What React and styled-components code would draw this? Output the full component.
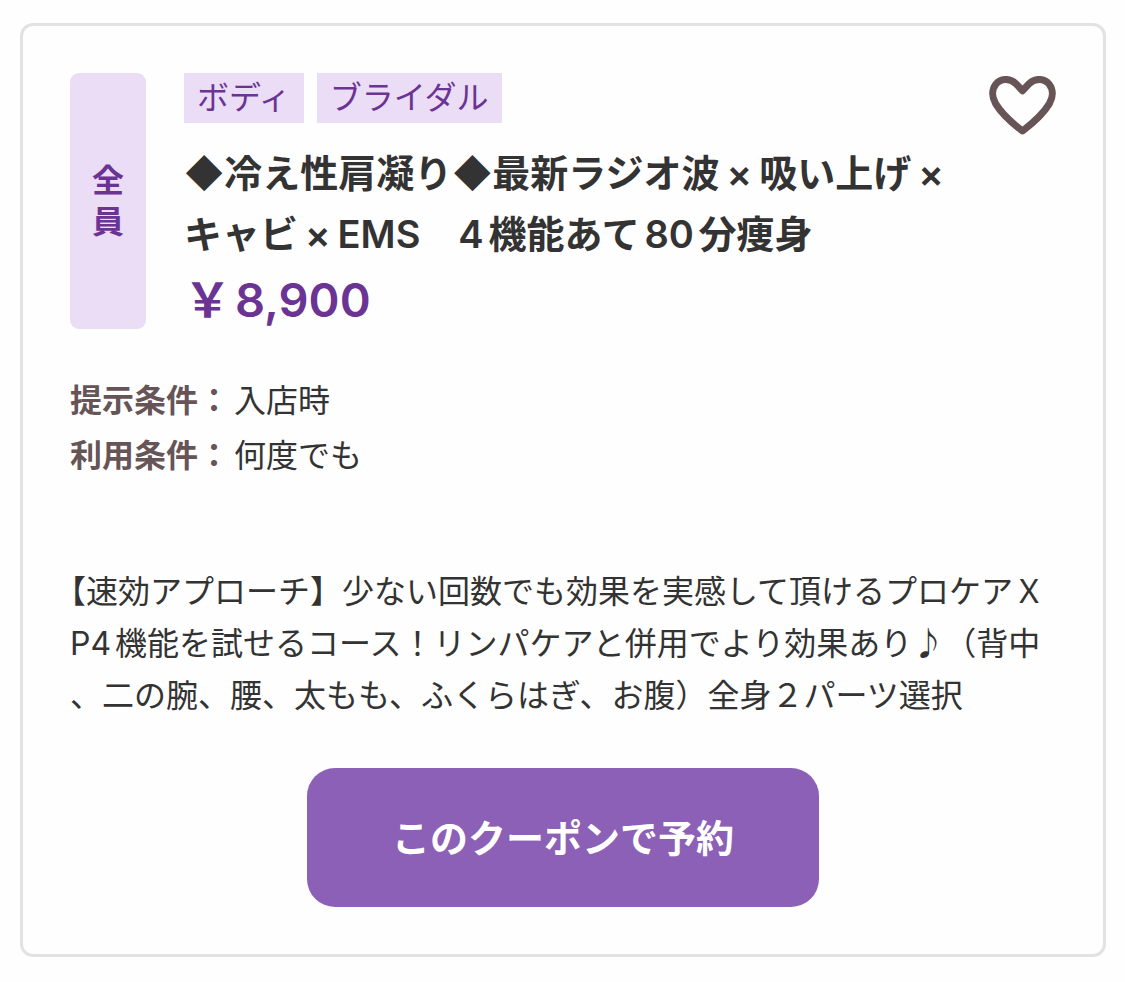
import React from 'react'
import styled, { createGlobalStyle } from 'styled-components'

const GlobalStyle = createGlobalStyle`
    * {
        box-sizing: border-box;
    }

    body {
        margin: 0;
        background: #fefefe;
        color: #333;
        font-family: Inter, "Noto Sans CJK JP", sans-serif;
        font-size: 32px;
    }
`

const Card = styled.article`
    margin: 23px 19px 25px 20px;
    padding: 47px;
    border: 3px solid #e2e2e2;
    border-radius: 13px;
`

const Header = styled.header`
    display: flex;
    align-items: stretch;
`

const Target = styled.div`
    display: flex;
    flex: none;
    align-items: center;
    justify-content: center;
    width: 76px;
    margin-right: 38px;
    padding: 0 22px;
    border-radius: 9px;
    background: #eaddf5;
    color: #6b3494;
    font-weight: bold;
    line-height: 41px;
    text-align: center;
`

const Summary = styled.div`
    flex: 1;
    min-width: 0;
`

const TagList = styled.ul`
    display: flex;
    flex-wrap: wrap;
    gap: 13px;
    margin: 0 0 20px;
    padding: 0;
    list-style: none;
`

const Tag = styled.li`
    padding: 0 13px;
    background: #eaddf5;
    color: #6b3494;
    line-height: 50px;
`

const Title = styled.h2`
    margin: 0;
    font-size: 38px;
    font-weight: 600;
    line-height: 61px;
    text-autospace: normal;
`

const Times = styled.span`
    margin: 0 7px;
`

const Price = styled.p`
    display: flex;
    gap: 4px;
    margin: 0;
    padding-top: 6px;
    color: #6b3494;
    font-size: 47px;
    font-weight: 600;
    line-height: 58px;
`

const FavoriteButton = styled.button`
    flex: none;
    align-self: flex-start;
    margin-top: 3px;
    padding: 0;
    border: 0;
    background: none;
    cursor: pointer;

    svg {
        display: block;
    }
`

const Conditions = styled.dl`
    margin: 44px 0 83px;
    line-height: 55px;
`

const Condition = styled.div`
    display: flex;
    gap: 4px;
`

const Term = styled.dt`
    color: #665457;
    font-weight: bold;
`

const Detail = styled.dd`
    margin: 0;
`

const Description = styled.p`
    margin: 0 0 46px;
    line-height: 52px;
    text-autospace: normal;
    text-spacing-trim: trim-start;
`

const Note = styled.span`
    font-family: "Noto Sans CJK JP", sans-serif;
    font-weight: bold;
    line-height: 1;
`

const ReserveButton = styled.button`
    display: block;
    width: 52%;
    height: 139px;
    margin: 0 auto;
    padding: 0 0 4px;
    border: 0;
    border-radius: 28px;
    background: #8b60b6;
    color: #fff;
    font-family: inherit;
    font-size: 38px;
    font-weight: bold;
    cursor: pointer;
`

const tags = ['ボディ', 'ブライダル']

const conditions = [
    { term: '提示条件', detail: '入店時' },
    { term: '利用条件', detail: '何度でも' },
]

const HeartIcon = () => (
    <svg width="67" height="59" viewBox="0 0 67 59" fill="none" aria-hidden="true">
        <path
            d="M33.5 14.8C31 12.3 29 9.6 26.5 7.3C20.5 1.8 11.5 2.3 6.9 8.2C2.6 13.7 2.7 21 6.6 27.6C12.2 37 22.5 46.6 33.5 55C44.5 46.6 54.8 37 60.4 27.6C64.3 21 64.4 13.7 60.1 8.2C55.5 2.3 46.5 1.8 40.5 7.3C38 9.6 36 12.3 33.5 14.8Z"
            stroke="#665457"
            strokeWidth="7"
            strokeLinejoin="round"
        />
    </svg>
)

const App = () => (
    <>
        <GlobalStyle />
        <Card>
            <Header>
                <Target>全員</Target>
                <Summary>
                    <TagList>
                        { tags.map(tag => <Tag key={ tag }>{ tag }</Tag>) }
                    </TagList>
                    <Title>
                        ◆冷え性肩凝り◆最新ラジオ波<Times>×</Times>吸い上げ<Times>×</Times>
                        <br />
                        キャビ<Times>×</Times>EMS　4機能あて80分痩身
                    </Title>
                    <Price>
                        <span>￥</span>
                        <span>8,900</span>
                    </Price>
                </Summary>
                <FavoriteButton type="button" aria-label="お気に入り">
                    <HeartIcon />
                </FavoriteButton>
            </Header>
            <Conditions>
                {
                    conditions.map(({ term, detail }) => (
                        <Condition key={ term }>
                            <Term>{ term }：</Term>
                            <Detail>{ detail }</Detail>
                        </Condition>
                    ))
                }
            </Conditions>
            <Description>
                【速効アプローチ】少ない回数でも効果を実感して頂けるプロケアＸ
                <br />
                P4機能を試せるコース！リンパケアと併用でより効果あり<Note>♪</Note>（背中
                <br />
                、二の腕、腰、太もも、ふくらはぎ、お腹）全身２パーツ選択
            </Description>
            <ReserveButton type="button">このクーポンで予約</ReserveButton>
        </Card>
    </>
)

export default App
